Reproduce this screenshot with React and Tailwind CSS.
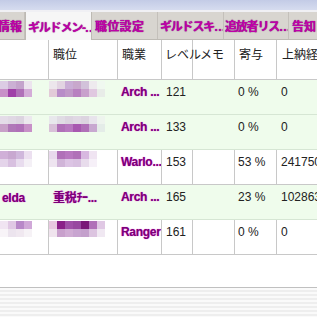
import React from "react";

const font = { fontFamily: '"Liberation Sans", "Noto Sans CJK JP", sans-serif' };

function Mosaic({ rows, w = 8, h = 8 }) {
  return (
    <div className="flex flex-col">
      {rows.map((r, i) => (
        <div key={i} className="flex">
          {r.map((c, j) => (
            <div key={j} style={{ width: w, height: h, background: c }} />
          ))}
        </div>
      ))}
    </div>
  );
}

const cols = "grid grid-cols-[49px_69px_44px_31px_42px_42px_60px]";

const rows = [
  {
    green: true,
    name: [["#dccce4", "#cbb0d4", "#c4a4cc", "#ece4ee"], ["#c890c8", "#a040a8", "#b070b8", "#d4acd8"]],
    rank: [["#ece6ec", "#e2d4e2", "#caaed6", "#c8a8cc", "#d2c2da", "#eeeaee", "#f0f8f0"], ["#e2cad8", "#b88cc8", "#c098c8", "#b880c0", "#c8a0cc", "#e0c8e0", "#e8ece8"]],
    job: "Arch ...", lv: "121", pct: "0 %", val: "0",
  },
  {
    green: true,
    name: [["#e4dce8", "#e0d8e4", "#dcd4e0", "#ece8ee"], ["#c8a0c8", "#b078b8", "#b070b8", "#c890c8"]],
    rank: [["#e8e8ec", "#e0dce4", "#dcd4e0", "#e0d8e4", "#dcd4e0", "#e8e4ec", "#eef4ee"], ["#d8c0d8", "#b070b8", "#b878c0", "#a858b0", "#b070b8", "#c8a8d0", "#e4ece8"]],
    job: "Arch ...", lv: "133", pct: "0 %", val: "0",
  },
  {
    green: false,
    name: [["#d0b0d8", "#c8a8d0", "#d0b8dc", "#ece0f0"], ["#e4d4ea", "#d8c0e0", "#e8dcee", "#f4f0f6"]],
    rank: [["#e8d8ec", "#b070b8", "#b878c0", "#b070b8", "#d8b8e0", "#f0e4f2", "#ffffff"], ["#eee4f0", "#d0b4d8", "#dcc4e4", "#d8c0e0", "#e8dcec", "#f6f0f8", "#ffffff"]],
    job: "Warlo...", lv: "153", pct: "53 %", val: "241750",
  },
  {
    green: true,
    nameText: "elda", rankText: "重税ﾁｰ...",
    job: "Arch ...", lv: "165", pct: "23 %", val: "102863",
  },
  {
    green: false,
    name: [["#f0e4f2", "#e0c8e4", "#b888c8", "#d0a8d8"], ["#f8f4f8", "#ece4ee", "#f0e8f0", "#f6f2f6"]],
    rank: [["#e8c8e0", "#8a2088", "#a050a8", "#9848a0", "#7a1878", "#b070b8", "#e0c8e4"], ["#f0e4ee", "#c8a0cc", "#d0acd4", "#c8a4d0", "#c4a0cc", "#dcc4e0", "#f0e8f2"]],
    job: "Ranger", lv: "161", pct: "0 %", val: "0",
  },
];

const purple = "font-bold text-[#7a0078] [text-shadow:0_0_1px_#e020d0] tracking-[-0.3px]";

export default function App() {
  return (
    <div className="w-[317px] h-[317px] overflow-hidden bg-white flex flex-col text-[12px] text-[#222]" style={font}>
      {/* top gradient bar */}
      <div className="h-[10px] bg-gradient-to-b from-[#c3cbe6] to-[#d6dcef]" />
      <div className="h-[2px] bg-[#f0f0f4]" />
      {/* tabs */}
      <div className="h-[28px] flex bg-[#d8d5d0] border-b border-[#bdbab4]">
        {[
          ["情報", "w-[25px] justify-end pr-[2px]", false, ""],
          ["ギルドメン-…", "w-[67px] pl-[2px]", true, "tracking-[-1.2px]"],
          ["職位設定", "w-[66px] pl-[3px]", false, "tracking-[0.3px]"],
          ["ギルドスキ…", "w-[66px] pl-[2px]", false, "tracking-[-1.2px]"],
          ["追放者リス…", "w-[65px] pl-[1px]", false, "tracking-[-1.2px]"],
          ["告知", "w-[40px] pl-[3px]", false, ""],
        ].map(([t, c, active, tr], i) => (
          <div
            key={i}
            className={`${c} ${tr} shrink-0 flex items-center pt-[3px] overflow-hidden whitespace-nowrap text-[12px] font-bold text-[#c000a8] [text-shadow:0_0_1px_#600060] ${
              active ? "bg-[#f6f6f6] border-x border-[#bdbab4] -mb-px" : "border-r border-[#c4c0bb]"
            }`}
          >
            {t}
          </div>
        ))}
      </div>
      {/* header */}
      <div className={`${cols} h-[40px] border-b border-[#c8c8c8] shrink-0`}>
        <div className="border-r border-[#c8c8c8]" />
        <div className="border-r border-[#c8c8c8] pl-[4px] pt-[6px]">職位</div>
        <div className="border-r border-[#c8c8c8] pl-[4px] pt-[6px]">職業</div>
        <div className="border-r border-[#c8c8c8] pl-[3px] pt-[6px] whitespace-nowrap relative z-10">レベル</div>
        <div className="border-r border-[#c8c8c8] pl-[7px] pt-[6px]">メモ</div>
        <div className="border-r border-[#c8c8c8] pl-[4px] pt-[6px]">寄与</div>
        <div className="pl-[5px] pt-[6px] whitespace-nowrap">上納経</div>
      </div>
      {rows.map((r, i) => {
        const line = r.green ? "border-transparent" : "border-[#c8c8c8]";
        return (
          <div
            key={i}
            className={`${cols} h-[35px] shrink-0 border-b ${
              r.green ? "bg-[#effcec] border-[#d6e6d4]" : "bg-white border-[#c8c8c8]"
            }`}
          >
            <div className={`border-r ${line} overflow-hidden pt-[1px]`}>
              {r.name ? <Mosaic rows={r.name} /> : <div className={`${purple} pl-[2px] pt-[3px]`}>{r.nameText}</div>}
            </div>
            <div className={`border-r ${line} overflow-hidden pt-[1px]`}>
              {r.rank ? <Mosaic rows={r.rank} /> : <div className={`${purple} pl-[4px] pt-[3px] whitespace-nowrap`}>{r.rankText}</div>}
            </div>
            <div className={`border-r ${line} pl-[3px] pt-[3px] whitespace-nowrap overflow-hidden ${purple}`}>{r.job}</div>
            <div className={`border-r ${line} pl-[4px] pt-[3px]`}>{r.lv}</div>
            <div className={`border-r ${line}`} />
            <div className={`border-r ${line} pl-[3px] pt-[3px] whitespace-nowrap`}>{r.pct}</div>
            <div className="pl-[4px] pt-[3px] whitespace-nowrap overflow-hidden">{r.val}</div>
          </div>
        );
      })}
      <div className="h-[32px] shrink-0 bg-white" />
      <div className="h-[1px] bg-[#c0c0c0] shrink-0" />
      <div className="flex-1 bg-[repeating-linear-gradient(180deg,#fafafa_0px,#fafafa_2px,#eeeeee_2px,#eeeeee_4px)]" />
    </div>
  );
}
